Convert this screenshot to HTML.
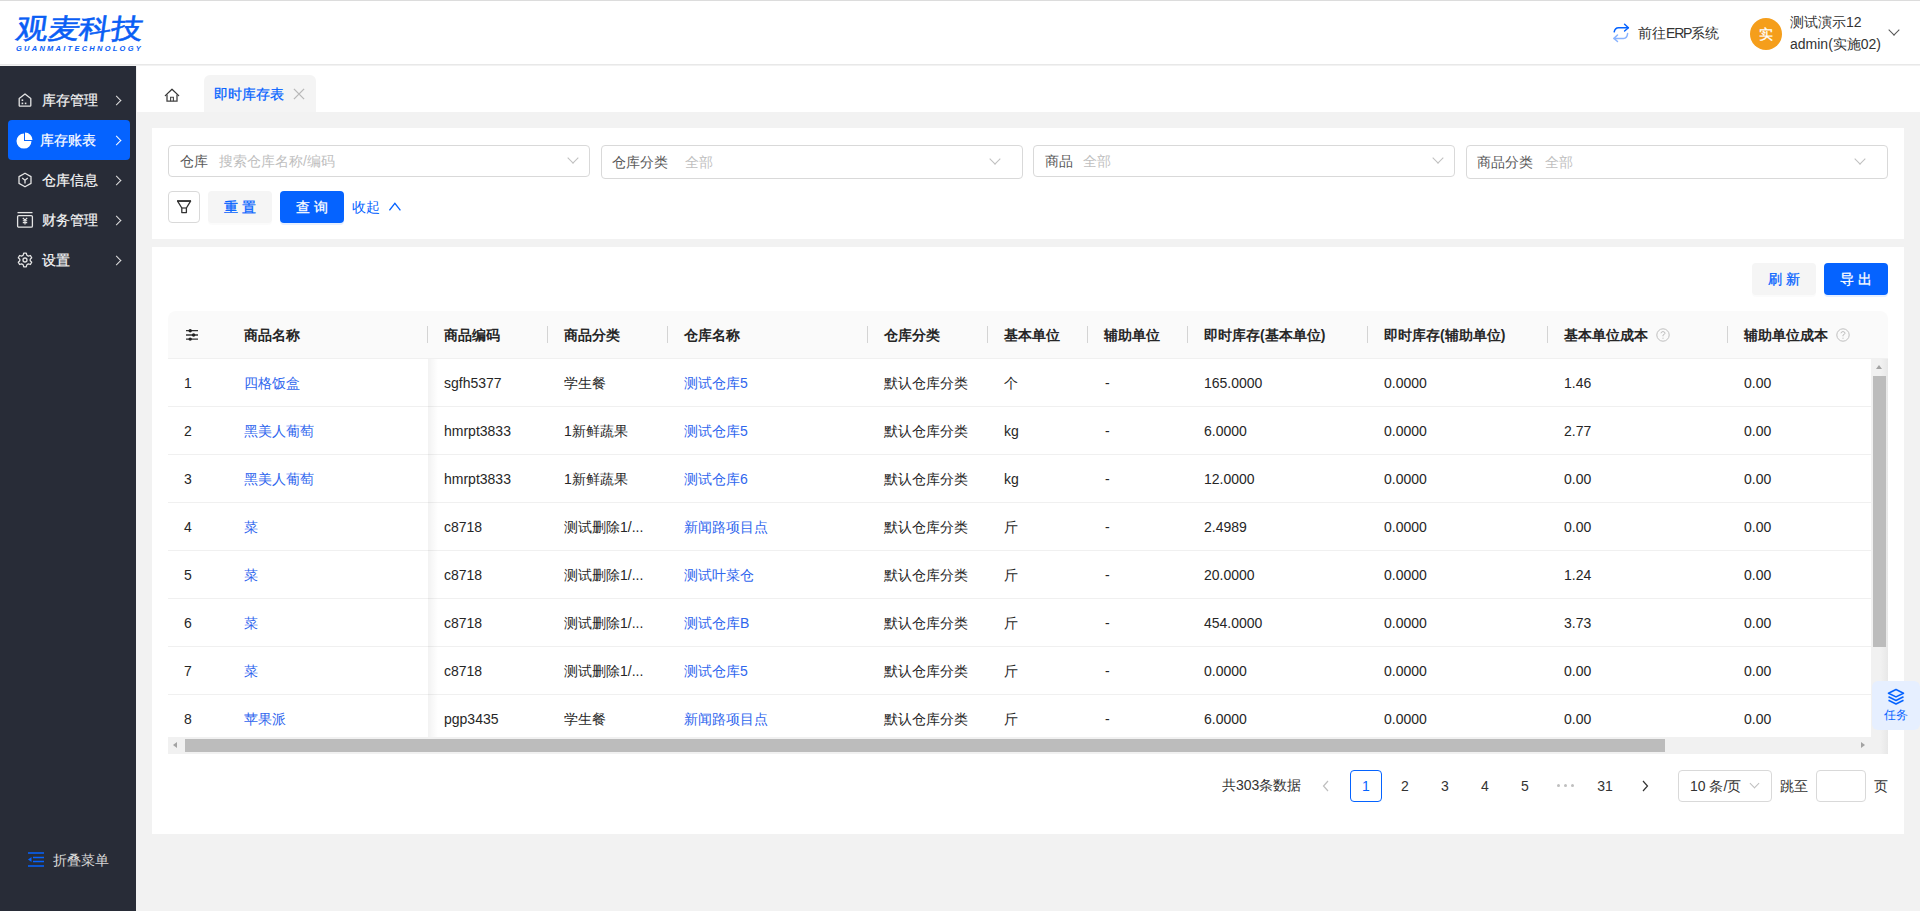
<!DOCTYPE html>
<html><head><meta charset="utf-8">
<style>
*{box-sizing:border-box;margin:0;padding:0}
html,body{width:1920px;height:911px;overflow:hidden}
body{font-family:"Liberation Sans",sans-serif;font-size:14px;color:#262626;background:#f2f2f2;position:relative}
.abs{position:absolute}
#topline{left:0;top:0;width:1920px;height:1px;background:#dcdcdc}
#header{left:0;top:1px;width:1920px;height:64px;background:#fff;border-bottom:1px solid #e8e8e8}
#sidebar{left:0;top:66px;width:136px;height:845px;background:#282c37}
#tabs{left:137px;top:66px;width:1783px;height:46px;background:#fff}
.card{background:#fff}
.menu{position:absolute;left:8px;width:122px;height:40px;color:#f5f5f5;font-weight:500;font-size:14px;line-height:40px;border-radius:4px}
.menu .t{position:absolute;left:34px;top:0;-webkit-text-stroke:0.2px currentColor}
.menu .arr{position:absolute;left:104.5px;top:16.5px;width:7px;height:7px;border-right:1.3px solid #e0e0e0;border-top:1.3px solid #e0e0e0;transform:rotate(45deg)}
.menu.active{background:#0563ff;color:#fff}
.sel{position:absolute;top:145px;height:32px;border:1px solid #d9d9d9;border-radius:4px;background:#fff}
.sel .lab{position:absolute;left:11px;top:5px;color:#595959;line-height:20px}
.sel .ph{position:absolute;top:5px;color:#bfbfbf;line-height:20px}
.sel .dd{position:absolute;right:12px;top:8px;width:8px;height:8px;border-right:1px solid #bfbfbf;border-bottom:1px solid #bfbfbf;transform:rotate(45deg)}
.btn{position:absolute;height:32px;border-radius:4px;line-height:32px;text-align:center;font-size:14px;-webkit-text-stroke:0.3px currentColor}
.btn.grey{background:#f5f5f5;color:#0563ff;box-shadow:0 2px 0 rgba(0,0,0,0.015)}
.btn.blue{background:#0563ff;color:#fff;box-shadow:0 2px 0 rgba(5,99,255,0.1)}
table{border-collapse:collapse}
.th{position:absolute;top:311px;height:48px;line-height:48px;font-weight:bold;color:#262626}
.sep{position:absolute;top:326px;width:1px;height:17px;background:#d4d4d4}
.row{position:absolute;left:168px;width:1704px;height:48px;border-bottom:1px solid #f0f0f0}
.cell{position:absolute;line-height:47px;top:1px;white-space:nowrap}
.link{color:#2f66ee}
</style></head><body>
<div id="topline" class="abs"></div>
<div id="header" class="abs">
  <div class="abs" id="logo" style="left:16px;top:12px;width:130px;height:40px">
    <div class="abs" style="left:3px;top:0px;font-size:29px;line-height:32px;font-weight:normal;color:#0a5ef5;-webkit-text-stroke:0.6px #0a5ef5;transform-origin:0 0;transform:scale(1.1,0.95) skewX(-7deg);white-space:nowrap;letter-spacing:-0.5px">观麦科技</div>
    <div class="abs" style="left:0px;top:32px;font-size:7.5px;line-height:8px;font-weight:bold;font-style:italic;color:#0a5ef5;letter-spacing:2.25px;white-space:nowrap">GUANMAITECHNOLOGY</div>
  </div>
  <svg class="abs" style="left:1606px;top:17px" width="30" height="30" viewBox="0 0 30 30">
    <path d="M8.2 13.8 Q9 9.8 12.5 9.7 H22.2" fill="none" stroke="#0563ff" stroke-width="1.5" stroke-linecap="round"/>
    <path d="M18.6 6.3 L22.4 9.7 L18.6 13" fill="none" stroke="#0563ff" stroke-width="1.5" stroke-linecap="round" stroke-linejoin="round"/>
    <path d="M21.6 15.5 Q21.2 20.3 17.5 20.4 H8" fill="none" stroke="#8ab4ff" stroke-width="1.5" stroke-linecap="round"/>
    <path d="M11.5 17 L8 20.4 L11.5 23.5" fill="none" stroke="#8ab4ff" stroke-width="1.5" stroke-linecap="round" stroke-linejoin="round"/>
  </svg>
  <div class="abs" style="left:1638px;top:22px;line-height:20px;color:#333">前往<span style="letter-spacing:-1.2px">ERP</span>系统</div>
  <div class="abs" style="left:1750px;top:16.5px;width:32px;height:32px;border-radius:50%;background:#f59e1b;color:#fff;text-align:center;line-height:32px;font-size:14px;-webkit-text-stroke:0.3px #fff">实</div>
  <div class="abs" style="left:1790px;top:11px;line-height:20px;color:#333">测试演示12</div>
  <div class="abs" style="left:1790px;top:33px;line-height:20px;color:#333">admin(实施02)</div>
  <div class="abs" style="left:1890px;top:25px;width:8px;height:8px;border-right:1.3px solid #555;border-bottom:1.3px solid #555;transform:rotate(45deg)"></div>
</div>
<div id="sidebar" class="abs">
  <svg class="abs" style="left:17px;top:26px" width="16" height="16" viewBox="0 0 16 16"><path d="M2.2 6.6 L8 2 L13.8 6.6 V13.4 Q13.8 14.2 13 14.2 H3 Q2.2 14.2 2.2 13.4 Z" fill="none" stroke="#e4e4e4" stroke-width="1.3" stroke-linejoin="round"/><rect x="4.6" y="7.4" width="1.6" height="1.6" fill="#e4e4e4"/><rect x="4.6" y="10.6" width="1.6" height="1.6" fill="#e4e4e4"/><rect x="7.8" y="10.6" width="1.6" height="1.6" fill="#e4e4e4"/></svg>
  <svg class="abs" style="left:15.5px;top:66px;z-index:3" width="18" height="18" viewBox="0 0 18 18"><path d="M8 1.6 A7.5 7.5 0 1 0 15.5 9.1 H8 Z" fill="#fff"/><path d="M9 0.6 A7.5 7.5 0 0 1 16.5 8.1 H9 Z" fill="#fff"/></svg>
  <svg class="abs" style="left:17px;top:106px" width="16" height="16" viewBox="0 0 16 16"><path d="M8 1.2 L14 4.6 V11.4 L8 14.8 L2 11.4 V4.6 Z" fill="none" stroke="#e4e4e4" stroke-width="1.3" stroke-linejoin="round"/><path d="M5.2 6 L8 8.2 L10.8 6 M8 8.2 V11.6" fill="none" stroke="#e4e4e4" stroke-width="1.3"/></svg>
  <svg class="abs" style="left:16px;top:145px" width="18" height="18" viewBox="0 0 18 18"><path d="M1.5 1.6 H16.5" stroke="#e4e4e4" stroke-width="1.3"/><rect x="1.6" y="4.6" width="14.8" height="11.6" rx="1.2" fill="none" stroke="#e4e4e4" stroke-width="1.3"/><path d="M6.8 7 L9 9 L11.2 7 M9 9 V13.6 M6.8 9.8 H11.2 M6.8 11.6 H11.2" fill="none" stroke="#e4e4e4" stroke-width="1.1"/></svg>
  <svg class="abs" style="left:17px;top:186px" width="16" height="16" viewBox="0 0 16 16"><path d="M6.7 1.2 H9.3 L9.8 3.2 L11.4 4.1 L13.4 3.5 L14.7 5.8 L13.2 7.2 V8.8 L14.7 10.2 L13.4 12.5 L11.4 11.9 L9.8 12.8 L9.3 14.8 H6.7 L6.2 12.8 L4.6 11.9 L2.6 12.5 L1.3 10.2 L2.8 8.8 V7.2 L1.3 5.8 L2.6 3.5 L4.6 4.1 L6.2 3.2 Z" fill="none" stroke="#e4e4e4" stroke-width="1.3" stroke-linejoin="round"/><circle cx="8" cy="8" r="2" fill="none" stroke="#e4e4e4" stroke-width="1.3"/></svg>
  <div class="menu" style="top:14px"><span class="t">库存管理</span><span class="arr"></span></div>
  <div class="menu active" style="top:54px"><span class="t" style="left:32px">库存账表</span><span class="arr" style="border-color:#fff"></span></div>
  <div class="menu" style="top:94px"><span class="t">仓库信息</span><span class="arr"></span></div>
  <div class="menu" style="top:134px"><span class="t">财务管理</span><span class="arr"></span></div>
  <div class="menu" style="top:174px"><span class="t">设置</span><span class="arr"></span></div>
</div>
<div id="tabs" class="abs">
  <svg class="abs" style="left:27px;top:21px" width="16" height="16" viewBox="0 0 16 16"><path d="M1.3 8.6 L8 2.2 L14.7 8.6" fill="none" stroke="#333" stroke-width="1.2" stroke-linecap="round" stroke-linejoin="round"/><path d="M3 7.4 V14.2 H13 V7.4" fill="none" stroke="#444" stroke-width="1.3"/><path d="M6.6 14.2 V10.2 H9.4 V14.2" fill="none" stroke="#444" stroke-width="1.1"/></svg>
  <div class="abs" style="left:67px;top:9px;width:112px;height:37px;background:#f4f4f4;border-radius:6px 6px 0 0"></div>
  <div class="abs" style="left:77px;top:17.5px;line-height:20px;color:#0563ff;-webkit-text-stroke:0.25px #0563ff">即时库存表</div>
  <svg class="abs" style="left:156px;top:22px" width="12" height="12" viewBox="0 0 12 12"><path d="M0.9 0.9 L11.1 11.1 M11.1 0.9 L0.9 11.1" stroke="#b8b8b8" stroke-width="1.3"/></svg>
</div>
<div class="abs card" style="left:152px;top:128px;width:1752px;height:111px"></div>
<div class="sel" style="left:168px;width:422px"><span class="lab">仓库</span><span class="ph" style="left:50px">搜索仓库名称/编码</span><span class="dd"></span></div>
<div class="sel" style="left:601px;width:422px;height:34px"><span class="lab" style="left:10px;top:6px">仓库分类</span><span class="ph" style="left:83px;top:6px">全部</span><span class="dd" style="right:23px;top:9px"></span></div>
<div class="sel" style="left:1033px;width:422px"><span class="lab">商品</span><span class="ph" style="left:49px">全部</span><span class="dd"></span></div>
<div class="sel" style="left:1466px;width:422px;height:34px"><span class="lab" style="left:10px;top:6px">商品分类</span><span class="ph" style="left:78px;top:6px">全部</span><span class="dd" style="right:23px;top:9px"></span></div>
<div class="abs" style="left:168px;top:191px;width:32px;height:32px;border:1px solid #d9d9d9;border-radius:4px;background:#fff">
  <svg class="abs" style="left:7px;top:7px" width="16" height="16" viewBox="0 0 16 16"><path d="M1.6 2.2 H14.6 L10.4 9 V13.6 H5.8 V9 Z" fill="none" stroke="#333" stroke-width="1.3" stroke-linejoin="round"/><path d="M5.8 9 H10.4" stroke="#333" stroke-width="1.2"/><path d="M1 2 H15" stroke="#333" stroke-width="1.6"/></svg>
</div>
<div class="btn grey" style="left:208px;top:191px;width:64px">重 置</div>
<div class="btn blue" style="left:280px;top:191px;width:64px">查 询</div>
<div class="abs" style="left:352px;top:197px;line-height:20px;color:#0563ff">收起</div>
<svg class="abs" style="left:389px;top:201px" width="12" height="10" viewBox="0 0 12 10"><path d="M0.4 9.4 L5.9 2.4 L11.4 9.4" fill="none" stroke="#0563ff" stroke-width="1.3"/></svg>
<div class="abs card" style="left:152px;top:247px;width:1752px;height:587px"></div>
<div class="btn grey" style="left:1752px;top:263px;width:64px">刷 新</div>
<div class="btn blue" style="left:1824px;top:263px;width:64px">导 出</div>
<div class="abs" style="left:168px;top:311px;width:1720px;height:48px;background:#fafafa;border-radius:8px 8px 0 0;border-bottom:1px solid #f0f0f0"></div>
<svg class="abs" style="left:186px;top:329px" width="12" height="12" viewBox="0 0 12 12"><path d="M0 1.7H12M0 6H12M0 10.1H12" stroke="#333" stroke-width="1.3"/><circle cx="4.2" cy="1.7" r="1.7" fill="#222"/><circle cx="7.6" cy="6" r="1.7" fill="#222"/><circle cx="4.2" cy="10.1" r="1.7" fill="#222"/></svg>
<div class="th" style="left:244px">商品名称</div>
<div class="th" style="left:444px">商品编码</div>
<div class="th" style="left:564px">商品分类</div>
<div class="th" style="left:684px">仓库名称</div>
<div class="th" style="left:884px">仓库分类</div>
<div class="th" style="left:1004px">基本单位</div>
<div class="th" style="left:1104px">辅助单位</div>
<div class="th" style="left:1204px">即时库存(基本单位)</div>
<div class="th" style="left:1384px">即时库存(辅助单位)</div>
<div class="th" style="left:1564px">基本单位成本</div>
<div class="th" style="left:1744px">辅助单位成本</div>
<div class="sep" style="left:427px"></div>
<div class="sep" style="left:547px"></div>
<div class="sep" style="left:667px"></div>
<div class="sep" style="left:867px"></div>
<div class="sep" style="left:987px"></div>
<div class="sep" style="left:1087px"></div>
<div class="sep" style="left:1187px"></div>
<div class="sep" style="left:1367px"></div>
<div class="sep" style="left:1547px"></div>
<div class="sep" style="left:1727px"></div>
<svg class="abs" style="left:1656px;top:328px" width="14" height="14" viewBox="0 0 14 14"><circle cx="7" cy="7" r="6.2" fill="none" stroke="#bfbfbf" stroke-width="1"/><path d="M5 5.3 Q5 3.6 7 3.6 Q9 3.6 9 5.2 Q9 6.3 7 7 V8.3" fill="none" stroke="#bfbfbf" stroke-width="1"/><circle cx="7" cy="10.2" r="0.6" fill="#bfbfbf"/></svg>
<svg class="abs" style="left:1836px;top:328px" width="14" height="14" viewBox="0 0 14 14"><circle cx="7" cy="7" r="6.2" fill="none" stroke="#bfbfbf" stroke-width="1"/><path d="M5 5.3 Q5 3.6 7 3.6 Q9 3.6 9 5.2 Q9 6.3 7 7 V8.3" fill="none" stroke="#bfbfbf" stroke-width="1"/><circle cx="7" cy="10.2" r="0.6" fill="#bfbfbf"/></svg>
<div class="abs" style="left:168px;top:359px;width:1703px;height:48px;border-bottom:1px solid #f0f0f0;overflow:hidden">
<div class="cell" style="left:16px">1</div>
<div class="cell link" style="left:76px">四格饭盒</div>
<div class="cell" style="left:276px">sgfh5377</div>
<div class="cell" style="left:396px">学生餐</div>
<div class="cell link" style="left:516px">测试仓库5</div>
<div class="cell" style="left:716px">默认仓库分类</div>
<div class="cell" style="left:836px">个</div>
<div class="cell" style="left:937px">-</div>
<div class="cell" style="left:1036px">165.0000</div>
<div class="cell" style="left:1216px">0.0000</div>
<div class="cell" style="left:1396px">1.46</div>
<div class="cell" style="left:1576px">0.00</div>
</div>
<div class="abs" style="left:168px;top:407px;width:1703px;height:48px;border-bottom:1px solid #f0f0f0;overflow:hidden">
<div class="cell" style="left:16px">2</div>
<div class="cell link" style="left:76px">黑美人葡萄</div>
<div class="cell" style="left:276px">hmrpt3833</div>
<div class="cell" style="left:396px">1新鲜蔬果</div>
<div class="cell link" style="left:516px">测试仓库5</div>
<div class="cell" style="left:716px">默认仓库分类</div>
<div class="cell" style="left:836px">kg</div>
<div class="cell" style="left:937px">-</div>
<div class="cell" style="left:1036px">6.0000</div>
<div class="cell" style="left:1216px">0.0000</div>
<div class="cell" style="left:1396px">2.77</div>
<div class="cell" style="left:1576px">0.00</div>
</div>
<div class="abs" style="left:168px;top:455px;width:1703px;height:48px;border-bottom:1px solid #f0f0f0;overflow:hidden">
<div class="cell" style="left:16px">3</div>
<div class="cell link" style="left:76px">黑美人葡萄</div>
<div class="cell" style="left:276px">hmrpt3833</div>
<div class="cell" style="left:396px">1新鲜蔬果</div>
<div class="cell link" style="left:516px">测试仓库6</div>
<div class="cell" style="left:716px">默认仓库分类</div>
<div class="cell" style="left:836px">kg</div>
<div class="cell" style="left:937px">-</div>
<div class="cell" style="left:1036px">12.0000</div>
<div class="cell" style="left:1216px">0.0000</div>
<div class="cell" style="left:1396px">0.00</div>
<div class="cell" style="left:1576px">0.00</div>
</div>
<div class="abs" style="left:168px;top:503px;width:1703px;height:48px;border-bottom:1px solid #f0f0f0;overflow:hidden">
<div class="cell" style="left:16px">4</div>
<div class="cell link" style="left:76px">菜</div>
<div class="cell" style="left:276px">c8718</div>
<div class="cell" style="left:396px">测试删除1/...</div>
<div class="cell link" style="left:516px">新闻路项目点</div>
<div class="cell" style="left:716px">默认仓库分类</div>
<div class="cell" style="left:836px">斤</div>
<div class="cell" style="left:937px">-</div>
<div class="cell" style="left:1036px">2.4989</div>
<div class="cell" style="left:1216px">0.0000</div>
<div class="cell" style="left:1396px">0.00</div>
<div class="cell" style="left:1576px">0.00</div>
</div>
<div class="abs" style="left:168px;top:551px;width:1703px;height:48px;border-bottom:1px solid #f0f0f0;overflow:hidden">
<div class="cell" style="left:16px">5</div>
<div class="cell link" style="left:76px">菜</div>
<div class="cell" style="left:276px">c8718</div>
<div class="cell" style="left:396px">测试删除1/...</div>
<div class="cell link" style="left:516px">测试叶菜仓</div>
<div class="cell" style="left:716px">默认仓库分类</div>
<div class="cell" style="left:836px">斤</div>
<div class="cell" style="left:937px">-</div>
<div class="cell" style="left:1036px">20.0000</div>
<div class="cell" style="left:1216px">0.0000</div>
<div class="cell" style="left:1396px">1.24</div>
<div class="cell" style="left:1576px">0.00</div>
</div>
<div class="abs" style="left:168px;top:599px;width:1703px;height:48px;border-bottom:1px solid #f0f0f0;overflow:hidden">
<div class="cell" style="left:16px">6</div>
<div class="cell link" style="left:76px">菜</div>
<div class="cell" style="left:276px">c8718</div>
<div class="cell" style="left:396px">测试删除1/...</div>
<div class="cell link" style="left:516px">测试仓库B</div>
<div class="cell" style="left:716px">默认仓库分类</div>
<div class="cell" style="left:836px">斤</div>
<div class="cell" style="left:937px">-</div>
<div class="cell" style="left:1036px">454.0000</div>
<div class="cell" style="left:1216px">0.0000</div>
<div class="cell" style="left:1396px">3.73</div>
<div class="cell" style="left:1576px">0.00</div>
</div>
<div class="abs" style="left:168px;top:647px;width:1703px;height:48px;border-bottom:1px solid #f0f0f0;overflow:hidden">
<div class="cell" style="left:16px">7</div>
<div class="cell link" style="left:76px">菜</div>
<div class="cell" style="left:276px">c8718</div>
<div class="cell" style="left:396px">测试删除1/...</div>
<div class="cell link" style="left:516px">测试仓库5</div>
<div class="cell" style="left:716px">默认仓库分类</div>
<div class="cell" style="left:836px">斤</div>
<div class="cell" style="left:937px">-</div>
<div class="cell" style="left:1036px">0.0000</div>
<div class="cell" style="left:1216px">0.0000</div>
<div class="cell" style="left:1396px">0.00</div>
<div class="cell" style="left:1576px">0.00</div>
</div>
<div class="abs" style="left:168px;top:695px;width:1703px;height:42px;overflow:hidden">
<div class="cell" style="left:16px">8</div>
<div class="cell link" style="left:76px">苹果派</div>
<div class="cell" style="left:276px">pgp3435</div>
<div class="cell" style="left:396px">学生餐</div>
<div class="cell link" style="left:516px">新闻路项目点</div>
<div class="cell" style="left:716px">默认仓库分类</div>
<div class="cell" style="left:836px">斤</div>
<div class="cell" style="left:937px">-</div>
<div class="cell" style="left:1036px">6.0000</div>
<div class="cell" style="left:1216px">0.0000</div>
<div class="cell" style="left:1396px">0.00</div>
<div class="cell" style="left:1576px">0.00</div>
</div>
<div class="abs" style="left:428px;top:359px;width:10px;height:378px;background:linear-gradient(to right,rgba(0,0,0,0.05),rgba(0,0,0,0))"></div>
<div class="abs" style="left:168px;top:737px;width:1703px;height:17px;background:#f1f1f1"></div>
<div class="abs" style="left:185px;top:739px;width:1480px;height:13px;background:#bcbcbc"></div>
<div class="abs" style="left:173px;top:742px;width:0;height:0;border-top:3.5px solid transparent;border-bottom:3.5px solid transparent;border-right:4px solid #a3a3a3"></div>
<div class="abs" style="left:1861px;top:742px;width:0;height:0;border-top:3.5px solid transparent;border-bottom:3.5px solid transparent;border-left:4px solid #a3a3a3"></div>
<div class="abs" style="left:1871px;top:359px;width:17px;height:395px;background:linear-gradient(to right,#f1f1f1 55%,#e8e8e8)"></div>
<div class="abs" style="left:1873px;top:376px;width:13px;height:271px;background:#bcbcbc"></div>
<div class="abs" style="left:1876px;top:365px;width:0;height:0;border-left:3.5px solid transparent;border-right:3.5px solid transparent;border-bottom:4px solid #a3a3a3"></div>
<div class="abs" style="left:1872px;top:681px;width:48px;height:49px;background:#e6efff;border-radius:6px"></div>
<svg class="abs" style="left:1887px;top:688px" width="18" height="18" viewBox="0 0 18 18"><path d="M9 1.5 L16.5 5.2 L9 8.9 L1.5 5.2 Z" fill="none" stroke="#0563ff" stroke-width="1.6" stroke-linejoin="round"/><path d="M1.5 8.8 L9 12.5 L16.5 8.8 M1.5 12.3 L9 16 L16.5 12.3" fill="none" stroke="#0563ff" stroke-width="1.6" stroke-linejoin="round"/></svg>
<div class="abs" style="left:1884px;top:707px;font-size:12px;line-height:16px;color:#0563ff">任务</div>
<div class="abs" style="left:1222px;top:775px;line-height:20px;color:#333">共303条数据</div>
<svg class="abs" style="left:1321px;top:780px" width="10" height="12" viewBox="0 0 10 12"><path d="M7 1 L2.5 6 L7 11" fill="none" stroke="#bfbfbf" stroke-width="1.2"/></svg>
<div class="abs" style="left:1350px;top:770px;width:32px;height:32px;border:1px solid #0563ff;border-radius:4px;text-align:center;line-height:30px;color:#0563ff">1</div>
<div class="abs" style="left:1389px;top:770px;width:32px;text-align:center;line-height:32px;color:#333">2</div>
<div class="abs" style="left:1429px;top:770px;width:32px;text-align:center;line-height:32px;color:#333">3</div>
<div class="abs" style="left:1469px;top:770px;width:32px;text-align:center;line-height:32px;color:#333">4</div>
<div class="abs" style="left:1509px;top:770px;width:32px;text-align:center;line-height:32px;color:#333">5</div>
<div class="abs" style="left:1589px;top:770px;width:32px;text-align:center;line-height:32px;color:#333">31</div>
<div class="abs" style="left:1556px;top:784px;width:20px;height:4px"><i class="abs" style="left:1px;top:0;width:3px;height:3px;border-radius:50%;background:#bfbfbf"></i><i class="abs" style="left:8px;top:0;width:3px;height:3px;border-radius:50%;background:#bfbfbf"></i><i class="abs" style="left:15px;top:0;width:3px;height:3px;border-radius:50%;background:#bfbfbf"></i></div>
<svg class="abs" style="left:1640px;top:780px" width="10" height="12" viewBox="0 0 10 12"><path d="M3 1 L7.5 6 L3 11" fill="none" stroke="#333" stroke-width="1.2"/></svg>
<div class="abs" style="left:1678px;top:770px;width:94px;height:32px;border:1px solid #d9d9d9;border-radius:4px;background:#fff"><span class="abs" style="left:11px;top:5px;line-height:20px;color:#333">10 条/页</span><span class="abs" style="left:72px;top:9px;width:7px;height:7px;border-right:1px solid #bfbfbf;border-bottom:1px solid #bfbfbf;transform:rotate(45deg)"></span></div>
<div class="abs" style="left:1780px;top:776px;line-height:20px;color:#333">跳至</div>
<div class="abs" style="left:1816px;top:770px;width:50px;height:32px;border:1px solid #d9d9d9;border-radius:4px;background:#fff"></div>
<div class="abs" style="left:1874px;top:776px;line-height:20px;color:#333">页</div>
<svg class="abs" style="left:28px;top:852px" width="17" height="15" viewBox="0 0 17 15"><path d="M0 1 H16 M5 5.5 H16 M5 9.5 H16 M0 14 H16" stroke="#0563ff" stroke-width="1.6"/><path d="M0 7.5 L3.5 5 V10 Z" fill="#0563ff"/></svg>
<div class="abs" style="left:53px;top:850px;line-height:20px;color:#d9d9d9">折叠菜单</div>
</body></html>
